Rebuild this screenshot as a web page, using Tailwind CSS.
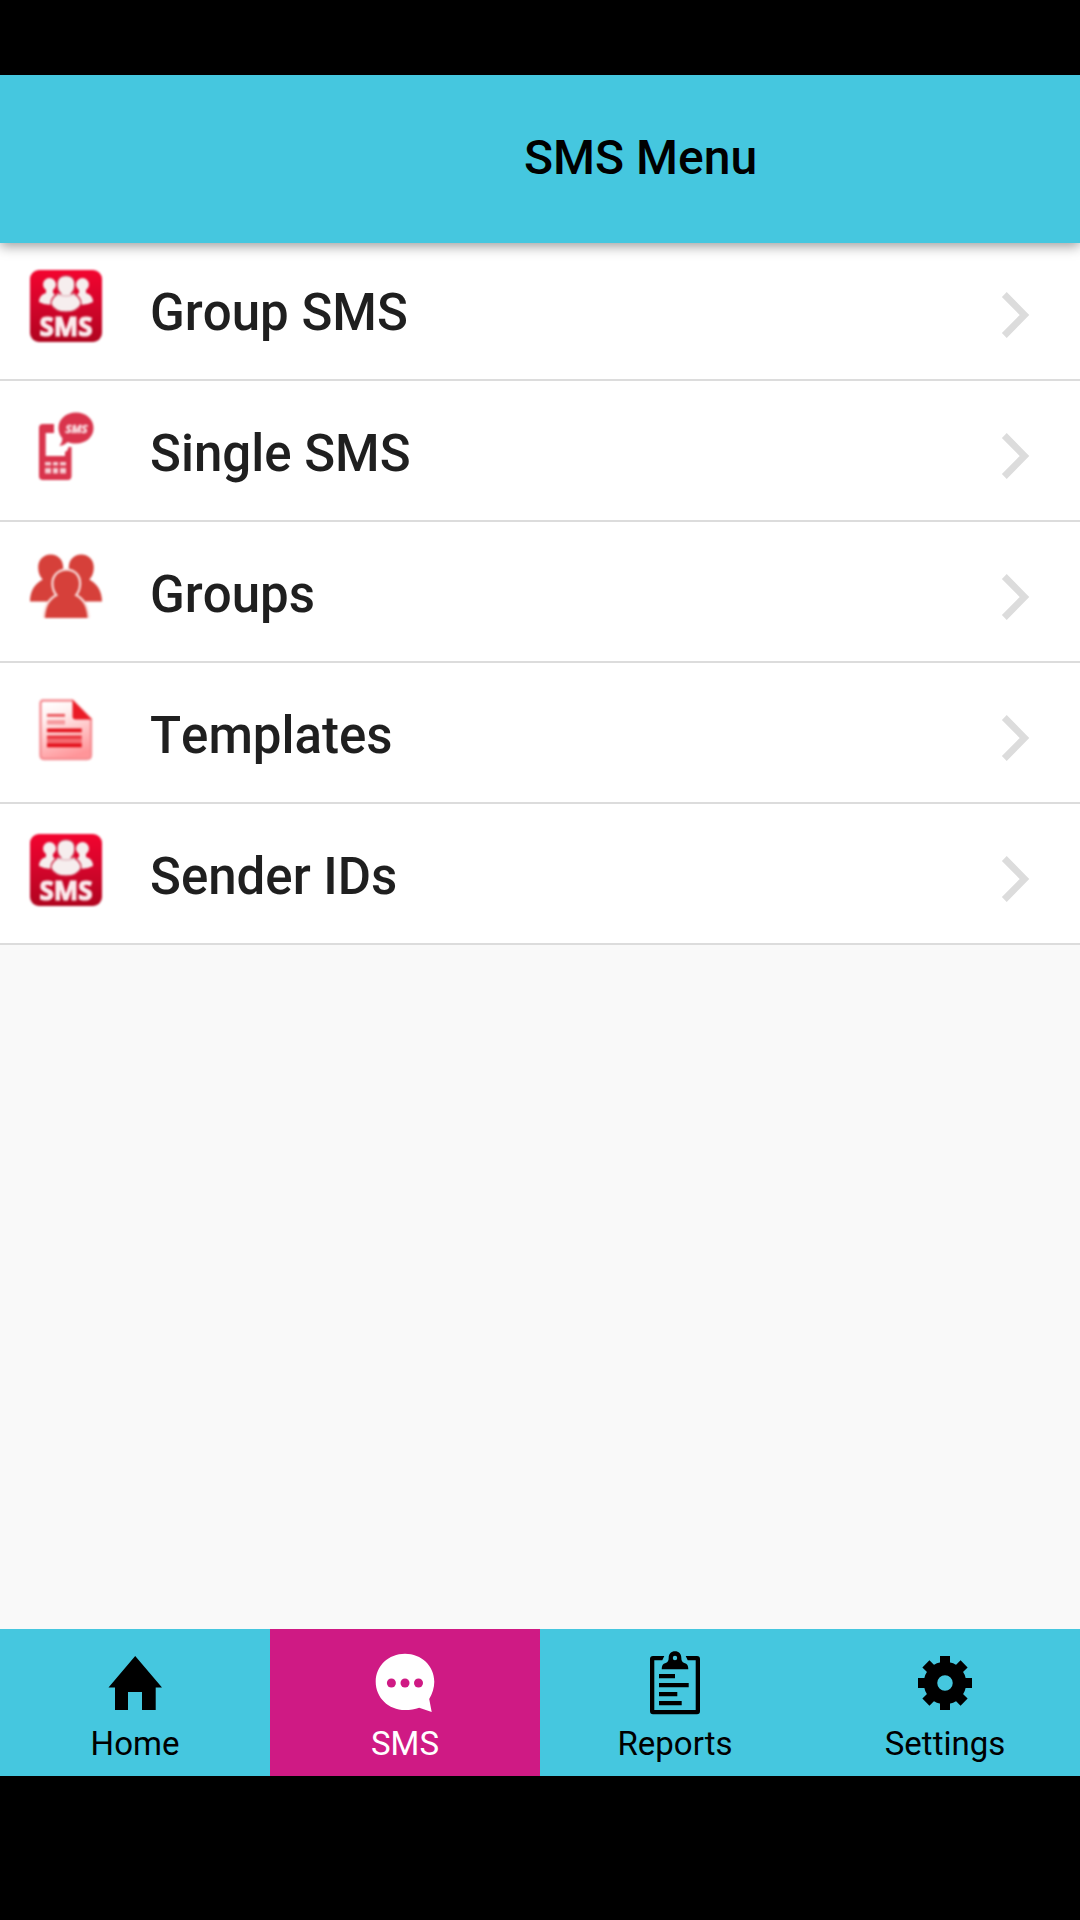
<!DOCTYPE html>
<html lang="en">
<head>
<meta charset="utf-8">
<title>SMS Menu</title>
<script src="https://cdn.jsdelivr.net/npm/@tailwindcss/browser@4"></script>
</head>
<body class="bg-black">
<svg width="0" height="0" class="absolute">
  <defs>
    <linearGradient id="red" x1="0" y1="0" x2="0" y2="1"><stop offset="0" stop-color="#f3042f"/><stop offset=".5" stop-color="#d3052b"/><stop offset="1" stop-color="#b0041f"/></linearGradient>
    <linearGradient id="page" x1=".2" y1="0" x2=".5" y2="1"><stop offset="0" stop-color="#fff"/><stop offset=".25" stop-color="#fff0f0"/><stop offset="1" stop-color="#ff9599"/></linearGradient>
    <symbol id="group-sms" viewBox="0 0 72 72">
      <rect width="72" height="72" rx="9" fill="url(#red)"/>
      <g fill="#f6eeee">
        <circle cx="19.500" cy="14.500" r="6.500"/><circle cx="52.500" cy="14.500" r="6.500"/>
        <path d="M16 19h7v4l4 3-1 8q-10 2-17-2 0-7 7-9zM56 19h-7v4l-4 3 1 8q10 2 17-2 0-7-7-9z"/>
        <path d="M36 5.500c5.500 0 9 3.500 9 9 0 4-1.500 7-3.500 9 6.500 1 9.500 5 9.500 11q-4 7.500-15 7.500t-15-7.500c0-6 3-10 9.500-11-2-2-3.500-5-3.500-9 0-5.500 3.500-9 9-9z" stroke="#cf2b48" stroke-width="1.500"/>
        <path d="M27 24q9 4 18 0" fill="none" stroke="#e3bcc3" stroke-width="1.500"/>
      </g>
      <text x="9.500" y="65.500" textLength="53" lengthAdjust="spacingAndGlyphs" font-family="Open Sans, sans-serif" font-weight="700" font-size="27" fill="#fbeaec" stroke="#fbeaec" stroke-width="1.200">SMS</text>
    </symbol>
    <symbol id="chevron" viewBox="0 0 30 48"><path d="M4.300 3.500 24.500 24 4.300 44.500" fill="none" stroke="#dcdcdc" stroke-width="6.800"/></symbol>
  </defs>
</svg>
<div class="flex h-[1920px] w-[1080px] flex-col overflow-hidden bg-black pt-[75px] font-['Roboto',sans-serif]">
  <header class="relative z-10 flex h-[168px] shrink-0 items-center bg-[#45c7df] pb-[2px] pl-[524px] shadow-[0_3px_12px_rgba(0,0,0,0.4)]">
    <h1 class="text-[48px] leading-[56px] font-medium text-black">SMS Menu</h1>
  </header>
  <main class="flex-1 bg-[#f9f9f9]">
    <ul class="-mt-[3px] text-[51px] leading-[60px] font-medium text-[#1f1f1f] [font-kerning:none]">
      <li class="flex h-[141px] items-start border-b-2 border-[#dcdcdc] bg-white pt-[30px] pr-[50px] pl-[30px]">
        <svg class="size-[72px] blur-[0.9px]"><use href="#group-sms"/></svg>
        <span class="mt-[13px] ml-[48px] flex-1">Group SMS</span>
        <svg class="mt-[21px] h-[48px] w-[30px]"><use href="#chevron"/></svg>
      </li>
      <li class="flex h-[141px] items-start border-b-2 border-[#dcdcdc] bg-white pt-[30px] pr-[50px] pl-[30px]">
        <svg class="size-[72px] blur-[0.9px]" viewBox="0 0 72 72">
          <path d="M13 13H24v9H15.700V45H35V41q3-1 3.500-5h3V65q0 4-4 4H13q-4 0-4-4V17q0-4 4-4z" fill="#d9344c"/>
          <path d="M15 51h6v3.500h-6zm8 0h5v3.500h-5zm7 0h6v3.500h-6zM15 57h6v5.500h-6zm8 0h5v5.500h-5zm7 0h6v5.500h-6z" fill="#f6ccd2"/>
          <path d="M46 1.500c10 0 17.500 6.500 17.500 15.500S56 32.500 46 32.500c-3 0-6-.5-8-1.500q-4 3.500-8.500 4 3-3.500 3-7.500c-2.500-3-4-6.500-4-10.500C28.500 8 36 1.500 46 1.500z" fill="#d9344c"/>
          <text x="35.500" y="21.500" textLength="22" lengthAdjust="spacingAndGlyphs" font-family="Open Sans, sans-serif" font-weight="700" font-style="italic" font-size="11" fill="#f9d5da" stroke="#f9d5da" stroke-width=".7">SMS</text>
        </svg>
        <span class="mt-[13px] ml-[48px] flex-1">Single SMS</span>
        <svg class="mt-[21px] h-[48px] w-[30px]"><use href="#chevron"/></svg>
      </li>
      <li class="flex h-[141px] items-start border-b-2 border-[#dcdcdc] bg-white pt-[30px] pr-[50px] pl-[30px]">
        <svg class="size-[72px] blur-[0.9px]" viewBox="0 0 72 72" fill="#d6403a">
          <path id="person" d="M20.700 2.500c7.500 0 12.500 5.500 12.500 13 0 5.500-2 9-4.500 12 8 3 12 10 13 22H0C0 39 5 31.500 12.700 27.500 10 24.500 8.200 21 8.200 15.500c0-7.500 5-13 12.500-13z"/>
          <use href="#person" transform="translate(72) scale(-1 1)"/>
          <path d="M36.500 18.700c7.500 0 12.500 5.300 12.500 12.800 0 5-1.500 8.500-4.500 12 8 3.500 12.500 11 13 22.500H15c.5-11.500 5-19 13-22.500-3-3.500-4.500-7-4.500-12 0-7.500 5.500-12.800 13-12.800z" stroke="#f9dcda" stroke-width="4.500" paint-order="stroke"/>
          <path d="M10 68h52" stroke="#fff" stroke-width="4"/>
        </svg>
        <span class="mt-[13px] ml-[48px] flex-1">Groups</span>
        <svg class="mt-[21px] h-[48px] w-[30px]"><use href="#chevron"/></svg>
      </li>
      <li class="flex h-[141px] items-start border-b-2 border-[#dcdcdc] bg-white pt-[30px] pr-[50px] pl-[30px]">
        <svg class="size-[72px] blur-[0.9px]" viewBox="0 0 72 72">
          <path d="M13 7.500H42.500L61 26V62q0 4-4 4H14q-3.500 0-3.500-4V11q0-3.500 2.500-3.500z" fill="url(#page)" stroke="#f59095" stroke-width="2.400"/>
          <path d="M42.500 7 61.500 26.500H45.500q-3 0-3-3z" fill="#ea1c26"/>
          <path d="M17 45h34.700v7H17z" fill="#f56a70"/>
          <path d="M17 22.300h18" stroke="#ea555b" stroke-width="2.800"/><path d="M17 29.300h18" stroke="#f69a9e" stroke-width="4.500"/>
          <path d="M17 37.300h34.700M17 52.300h34.700" stroke="#e3101b" stroke-width="3.800"/><path d="M17 44h34.700" stroke="#e8303a" stroke-width="3"/>
        </svg>
        <span class="mt-[13px] ml-[48px] flex-1">Templates</span>
        <svg class="mt-[21px] h-[48px] w-[30px]"><use href="#chevron"/></svg>
      </li>
      <li class="flex h-[141px] items-start border-b-2 border-[#dcdcdc] bg-white pt-[30px] pr-[50px] pl-[30px]">
        <svg class="size-[72px] blur-[0.9px]"><use href="#group-sms"/></svg>
        <span class="mt-[13px] ml-[48px] flex-1">Sender IDs</span>
        <svg class="mt-[21px] h-[48px] w-[30px]"><use href="#chevron"/></svg>
      </li>
    </ul>
  </main>
  <nav class="mb-[144px] grid h-[147px] shrink-0 grid-cols-4 bg-[#45c7df] text-[33px] leading-[40px] text-black">
    <a class="flex flex-col items-center pt-[18px]">
      <svg class="size-[72px]" viewBox="0 0 72 72"><path d="M36.200 9 63 40.500H56.700V63H43V45H29V63H16V40.500H9.500z"/></svg>
      <span class="mt-[5px]">Home</span>
    </a>
    <a class="flex flex-col items-center bg-[#cf1a84] pt-[18px] text-white">
      <svg class="size-[72px]" viewBox="0 0 72 72"><path fill="#fff" d="M36 6.700c16.500 0 29.300 12.300 29.300 28 0 6.300-2 12-5.100 17.300l2.500 13-12.500-4.300C46 62.300 41 63 36 63 19.500 63 6.700 50.500 6.700 34.700S19.500 6.700 36 6.700z"/><g fill="#cf1a84"><circle cx="22.400" cy="36" r="4.500"/><circle cx="36" cy="36" r="4.500"/><circle cx="49.500" cy="36" r="4.500"/></g></svg>
      <span class="mt-[5px]">SMS</span>
    </a>
    <a class="flex flex-col items-center pt-[18px]">
      <svg class="size-[72px]" viewBox="0 0 72 72"><path d="M25.300 9 23.300 13.300H15.300V63H56.700V13.300H48.700L46.700 9H58q3 0 3 3V64.300q0 3-3 3H14q-3 0-3-3V12q0-3 3-3z"/><path fill-rule="evenodd" d="M36 4.300c3.800 0 6.300 2.700 6.300 6.300 0 3 .7 4.700 3 5.400 3 .8 4 2.700 4 6.300H22.700c0-3.600 1-5.500 4-6.300 2.300-.7 3-2.400 3-5.400 0-3.600 2.500-6.300 6.300-6.300zm0 4.500a2.200 2.200 0 1 0 0 4.400 2.200 2.200 0 0 0 0-4.400z"/><path d="M20 27h16v4.300H20zM20 36h29.700v4.300H20zM20 45h18.300v4.300H20zM20 54h22.700v4.300H20z"/></svg>
      <span class="mt-[5px]">Reports</span>
    </a>
    <a class="flex flex-col items-center pt-[18px]">
      <svg class="size-[72px]" viewBox="0 0 72 72"><circle cx="36" cy="36" r="14.500" fill="none" stroke="#000" stroke-width="13.500"/><g id="teeth"><path id="tooth" d="M31 9h10v8H31zM31 55h10v8H31z"/><use href="#tooth" transform="rotate(45 36 36)"/></g><use href="#teeth" transform="rotate(90 36 36)"/></svg>
      <span class="mt-[5px]">Settings</span>
    </a>
  </nav>
</div>
</body>
</html>
